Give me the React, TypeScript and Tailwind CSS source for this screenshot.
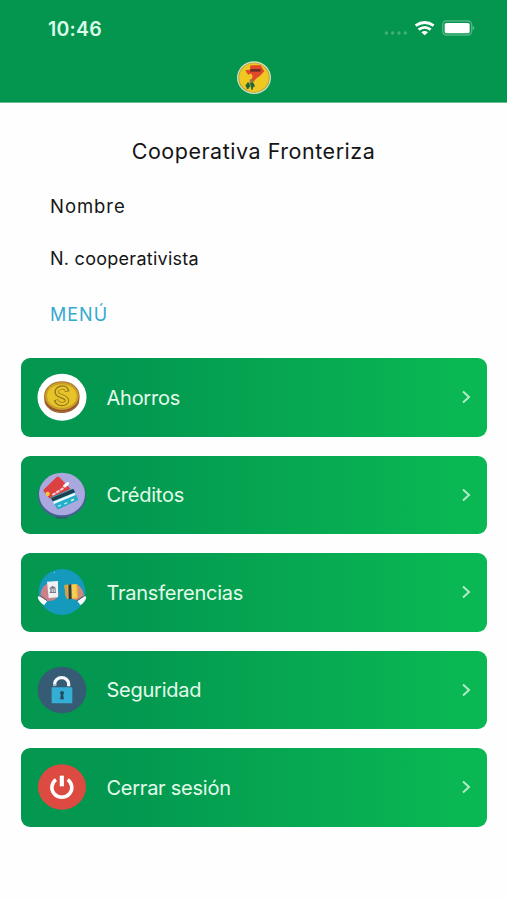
import type { ReactNode } from 'react';

const iconClass = 'h-12 w-[50px] shrink-0';

function CoinIcon() {
  return (
    <svg viewBox="67 69 150 144" className={iconClass}>
      <ellipse cx="142" cy="142" rx="73.5" ry="70.5" fill="#fff" />
      <path d="M89 137v12c0 21 23 40 52 40s53-19 53-40v-12z" fill="#8f5630" />
      <path d="M91 157c7 18 26 29 50 29s44-11 51-29" fill="none" stroke="#b37435" strokeWidth="3" />
      <ellipse cx="141.500" cy="137" rx="53" ry="43" fill="#a8742c" />
      <ellipse cx="141.500" cy="138" rx="50" ry="41" fill="#d4a129" />
      <ellipse cx="141.500" cy="138" rx="46" ry="37" fill="#e6c428" stroke="#ac8426" strokeWidth="1.500" />
      <path d="M158 125c-3-20-33-15-32 2 1 15 31 9 31 25 0 14-29 14-33-3" fill="none" stroke="#907521" strokeWidth="13" />
      <path d="M156 123c-3-16-30-11-29 4 1 14 30 9 30 25 0 13-28 13-31-1" fill="none" stroke="#e8c629" strokeWidth="7" />
    </svg>
  );
}

function CardsIcon() {
  return (
    <svg viewBox="67 62 150 144" className={iconClass}>
      <ellipse cx="142" cy="136" rx="72" ry="66" fill="#45618f" />
      <path d="M124 202h34" stroke="#35536c" strokeWidth="4" />
      <ellipse cx="142" cy="131" rx="69" ry="64" fill="#a9a8df" />
      <path d="M87 123q-2-4 2-7l37-36q4-3 8 1l34 35-63 29z" fill="#dc4142" />
      <path d="m113 134 36-22" stroke="#f6d5d8" strokeWidth="6" strokeDasharray="11 3" />
      <path d="m150 107 9-7" stroke="#fff" strokeWidth="9" strokeLinecap="round" />
      <circle cx="99" cy="131" r="6.5" fill="#f7c536" />
      <path d="m109 141 62-25q5-2 7 2l13 31-58 27q-4 2-7-2z" fill="#23aecb" />
      <path d="m109 144 67-28 5 10-67 27z" fill="#223e4c" />
      <path d="m115 154 65-27 3 7-65 27z" fill="#effaff" />
      <path d="m130 168 9-4m9-3 10-4" stroke="#b5f1f8" strokeWidth="4" />
      <path d="m169 151 9-4" stroke="#eaf5c0" strokeWidth="5" />
    </svg>
  );
}

function TransferIcon() {
  return (
    <svg viewBox="67 60 150 144" className={iconClass}>
      <ellipse cx="142" cy="132" rx="70" ry="69" fill="#159abd" />
      <path d="M96 108q-17 8-20 39l16 11q23 3 33-7l7-9-2-22z" fill="#c98088" />
      <path d="m97 101 33-2v49l-28 2z" fill="#f1f1f4" />
      <path d="m105 120 9-7 9 6v3h-18zm0 12h19v3h-19z" fill="#777b84" />
      <path d="M107 122h4v10h-4zm7 0h3v10h-3zm6 0h3v10h-3z" fill="#777b84" />
      <path d="m72 144 26 15-9 12q-13-5-20-22z" fill="#f7f8fa" />
      <path d="m77 143 20 15" stroke="#48566b" strokeWidth="3" />
      <path d="M184 109q22 8 25 38l-17 9q-16 2-20-7l6-20z" fill="#c98a80" />
      <path d="m149 111 39-3 2 43-31 2-6-10z" fill="#efb936" />
      <path d="m149 111 8-1 4 41-4 2-4-9z" fill="#cfa14d" />
      <path d="m161 110 9-1 1 44-9 1z" fill="#303a42" />
      <path d="m171 110 12-1 3 39-13 4z" fill="#f4ce55" />
      <path d="m212 144-24 15 9 12q12-6 18-22z" fill="#f7f8fa" />
      <path d="m207 144-20 14" stroke="#48566b" strokeWidth="3" />
      <circle cx="119" cy="73" r="2" fill="#8bd8e6" />
    </svg>
  );
}

function LockIcon() {
  return (
    <svg viewBox="67 62 150 144" className={iconClass}>
      <ellipse cx="142" cy="134" rx="73" ry="70" fill="#365b74" />
      <path d="M120 121v-5a21 19 0 0 1 42 0v7" fill="none" stroke="#f8f8ff" strokeWidth="9.500" />
      <path d="M115 116h10v5h-10z" fill="#a9bbc8" />
      <rect x="111" y="126" width="62" height="48" rx="2" fill="#35aed6" />
      <path d="M139 146h6l3 16h-12z" fill="#244b62" />
      <circle cx="142" cy="143" r="6" fill="#244b62" />
    </svg>
  );
}

function PowerIcon() {
  return (
    <svg viewBox="67 64 150 144" className={iconClass}>
      <ellipse cx="142" cy="136" rx="72" ry="68" fill="#dc4a42" />
      <path d="M124 114a30 29 0 1 0 35 0" fill="none" stroke="#fff" strokeWidth="10.500" />
      <path d="M141.500 102v32" stroke="#fff" strokeWidth="12.500" />
    </svg>
  );
}

function Logo() {
  return (
    <svg viewBox="708 180 108 105" className="h-[35px] w-9">
      <ellipse cx="762" cy="233" rx="51" ry="49" fill="#d5dfb8" />
      <ellipse cx="762" cy="233" rx="47" ry="45" fill="#a39a48" />
      <ellipse cx="762" cy="233" rx="44.500" ry="43" fill="#efc921" />
      <path d="M751 196h31l5 8 6 10-11 12-12 9-9 9-7-4 4-10-3-8-5-1-5 4-6-8-3-6 14-2z" fill="#df4a2c" />
      <path d="M751 207h31v8h-31z" fill="#702d25" />
      <path d="m749 239 6-3 7 8-3 4h-10z" fill="#9a7940" />
      <path d="m736 257 7-10 8 2 7-2 6 8-1 7-4-1-1 8h-4l-2-9-4 1-3 6h-4l-2-6z" fill="#20633b" />
      <path d="m748 248 5 14" stroke="#e4c43c" strokeWidth="2" />
    </svg>
  );
}

function StatusIcons() {
  return (
    <svg viewBox="1149 54 282 60" className="h-5 w-[94px]">
      <g fill="#45b078">
        <circle cx="1159" cy="99" r="5" />
        <circle cx="1178" cy="99" r="5" />
        <circle cx="1197" cy="99" r="5" />
        <circle cx="1216" cy="99" r="5" />
      </g>
      <g fill="none" stroke="#fff" strokeWidth="8.500">
        <path d="M1247 77q27-19 54 0" />
        <path d="M1256 89q18-14 36 0" />
      </g>
      <path d="M1264 97q10-8 20 0l-10 9z" fill="#fff" />
      <rect x="1328" y="63" width="87" height="42" rx="11" fill="none" stroke="#52b580" strokeWidth="4" />
      <rect x="1334" y="69" width="75" height="31" rx="5" fill="#fff" />
      <path d="M1418 77q11 7 0 14z" fill="#60bd8a" />
    </svg>
  );
}

type MenuItem = {
  label: string;
  icon: ReactNode;
};

const menuItems: MenuItem[] = [
  { label: 'Ahorros', icon: <CoinIcon /> },
  { label: 'Créditos', icon: <CardsIcon /> },
  { label: 'Transferencias', icon: <TransferIcon /> },
  { label: 'Seguridad', icon: <LockIcon /> },
  { label: 'Cerrar sesión', icon: <PowerIcon /> },
];

function MenuButton({ label, icon }: MenuItem) {
  return (
    <button className="flex h-[78.5px] w-full items-center rounded-[9px] bg-linear-to-r from-[#039750] from-20% to-[#0ab853] to-95% px-4 text-left text-[#e4fbeb]">
      {icon}
      <span className="ml-5 pt-px text-[20px] leading-6 tracking-[-0.25px]">{label}</span>
      <svg viewBox="0 0 10 14" className="ml-auto h-3.5 w-2.5" fill="none" stroke="#b5eac9" strokeWidth="2">
        <path d="m2 1.500 6 5.500-6 5.500" />
      </svg>
    </button>
  );
}

export default function App() {
  return (
    <div className="flex h-[900px] w-[507px] flex-col overflow-hidden bg-[#fefefe] font-['Inter',sans-serif] text-[#151515]">
      <header className="h-[103px] border-b border-[#67bd8e] bg-[#04964f]">
        <div className="flex h-[60px] items-center justify-between pl-12 pr-[30px]">
          <span className="-mt-px text-[19.5px] font-semibold tracking-[0.25px] text-[#dcfbe8]">10:46</span>
          <div className="-mt-1"><StatusIcons /></div>
        </div>
        <div className="flex justify-center"><Logo /></div>
      </header>

      <section className="flex flex-col px-[50px]">
        <h1 className="mt-8 text-center text-[21.5px] leading-8 tracking-[0.53px]">Cooperativa Fronteriza</h1>
        <p className="mt-[27px] text-[18.5px] leading-6 tracking-[0.95px]">Nombre</p>
        <p className="mt-[29px] text-[18px] leading-6 tracking-[0.27px]">N. cooperativista</p>
        <h2 className="mt-8 text-[18px] leading-6 tracking-[1px] text-[#35a9cf]">MENÚ</h2>
      </section>

      <nav className="mt-[31px] flex flex-col gap-[19px] pl-[20.5px] pr-5">
        {menuItems.map((item) => (
          <MenuButton key={item.label} {...item} />
        ))}
      </nav>
    </div>
  );
}
